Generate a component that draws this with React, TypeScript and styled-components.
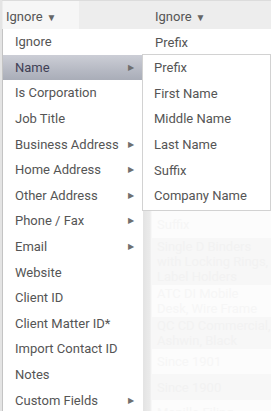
import styled, { createGlobalStyle } from 'styled-components'

const GlobalStyle = createGlobalStyle`
  html, body {
    margin: 0;
    padding: 0;
    background: #ffffff;
  }
  body {
    font-family: Roboto, "Liberation Sans", Arial, sans-serif;
  }
`

const Screen = styled.div`
  position: relative;
  width: 271px;
  height: 411px;
  overflow: hidden;
  background: #e4e4e4;
  padding-left: 2px;
  box-sizing: border-box;
  font-size: 13px;
  color: #555;
`

const Table = styled.div`
  display: flex;
  flex-direction: column;
  height: 100%;
  background: #fafafa;
`

const HeaderRow = styled.div`
  display: grid;
  grid-template-columns: 148px 1fr;
  height: 29px;
  flex-shrink: 0;
  background: #ededed;
  border-top: 1px solid #dcdcdc;
  box-sizing: border-box;
`

const HeaderCell = styled.div<{ $pad: number }>`
  display: flex;
  align-items: center;
  padding-left: ${p => p.$pad}px;
  padding-top: 3px;
`

const Trigger = styled.div<{ $active?: boolean }>`
  display: flex;
  align-items: center;
  gap: 4px;
  height: 100%;
  padding: 0 ${p => (p.$active ? '22px' : '0')} 0 ${p => (p.$active ? '3px' : '0')};
  margin-left: ${p => (p.$active ? '-2px' : '0')};
  margin-top: ${p => (p.$active ? '-3px' : '0')};
  padding-top: ${p => (p.$active ? '3px' : '0')};
  background: ${p => (p.$active ? '#f6f6f6' : 'transparent')};
  color: #555;
`

const Caret = styled.span`
  font-size: 10px;
  color: #666;
  margin-top: 1px;
`

const BodyGrid = styled.div`
  display: grid;
  grid-template-columns: 140px 1fr;
  flex: 1;
  min-height: 0;
`

const LeftCol = styled.div`
  background: #ffffff;
`

const RightCol = styled.div`
  display: flex;
  flex-direction: column;
  overflow: hidden;
  background: linear-gradient(to right, #e2e2e2 0, #ebebeb 8px, #fbfbfb 10px);
`

const PrefixRow = styled.div`
  height: 26px;
  flex-shrink: 0;
  display: flex;
  align-items: center;
  padding-left: 13px;
  background: #ffffff;
`

const GhostRow = styled.div<{ $h: number; $shade: boolean }>`
  height: ${p => p.$h}px;
  flex-shrink: 0;
  margin-left: 10px;
  padding-left: 5px;
  display: flex;
  flex-direction: column;
  justify-content: center;
  background: ${p => (p.$shade ? '#f7f7f7' : '#fcfcfc')};
  color: ${p => (p.$shade ? '#f2f2f2' : '#f6f6f6')};
  font-size: 13px;
  line-height: 15px;
  white-space: nowrap;
  overflow: hidden;
`

const Menu = styled.div`
  position: absolute;
  left: 2px;
  top: 29px;
  width: 141px;
  background: #ffffff;
  border-left: 1px solid #c4c4c4;
  box-sizing: border-box;
  display: flex;
  flex-direction: column;
`

const SubMenu = styled.div`
  position: absolute;
  left: 142px;
  top: 54px;
  width: 129px;
  background: #ffffff;
  border: 1px solid #d2d2d2;
  box-sizing: border-box;
  display: flex;
  flex-direction: column;
  padding-bottom: 1px;
`

const Item = styled.div<{ $selected?: boolean; $indent: number }>`
  height: 25.6px;
  flex-shrink: 0;
  display: flex;
  align-items: center;
  justify-content: space-between;
  padding: 0 9px 0 ${p => p.$indent}px;
  color: ${p => (p.$selected ? '#3f3f55' : '#555')};
  background: ${p =>
    p.$selected ? 'linear-gradient(to bottom, #ccced6 0%, #b8bbc5 55%, #a9adb8 100%)' : 'transparent'};
  white-space: nowrap;
`

const Arrow = styled.span`
  font-size: 8px;
  color: #6f6f6f;
`

const mainItems: { label: string; sub?: boolean }[] = [
  { label: 'Ignore' },
  { label: 'Name', sub: true },
  { label: 'Is Corporation' },
  { label: 'Job Title' },
  { label: 'Business Address', sub: true },
  { label: 'Home Address', sub: true },
  { label: 'Other Address', sub: true },
  { label: 'Phone / Fax', sub: true },
  { label: 'Email', sub: true },
  { label: 'Website' },
  { label: 'Client ID' },
  { label: 'Client Matter ID*' },
  { label: 'Import Contact ID' },
  { label: 'Notes' },
  { label: 'Custom Fields', sub: true },
]

const nameItems = ['Prefix', 'First Name', 'Middle Name', 'Last Name', 'Suffix', 'Company Name']

// rows of the table under the menus; the ones hidden by the submenu carry no text
const ghostRows: { h: number; lines: string[] }[] = [
  { h: 26, lines: [] },
  { h: 26, lines: [] },
  { h: 26, lines: [] },
  { h: 26, lines: [] },
  { h: 26, lines: [] },
  { h: 26, lines: [] },
  { h: 27, lines: ['Suffix'] },
  { h: 47, lines: ['Single D Binders', 'with Locking Rings,', 'Label Holders'] },
  { h: 32, lines: ['ATC DI Mobile', 'Desk, Wire Frame'] },
  { h: 32, lines: ['QC CD Commercial,', 'Ashwin, Black'] },
  { h: 25, lines: ['Since 1901'] },
  { h: 26, lines: ['Since 1900'] },
  { h: 25, lines: ['Manilla Filing'] },
]

export default function App() {
  return (
    <>
      <GlobalStyle />
      <Screen>
        <Table>
          <HeaderRow>
            <HeaderCell $pad={3}>
              <Trigger $active>
                Ignore <Caret>▼</Caret>
              </Trigger>
            </HeaderCell>
            <HeaderCell $pad={5}>
              <Trigger>
                Ignore <Caret>▼</Caret>
              </Trigger>
            </HeaderCell>
          </HeaderRow>
          <BodyGrid>
            <LeftCol />
            <RightCol>
              <PrefixRow>Prefix</PrefixRow>
              {ghostRows.map((r, i) => (
                <GhostRow key={i} $h={r.h} $shade={i % 2 === 1}>
                  {r.lines.map(l => (
                    <span key={l}>{l}</span>
                  ))}
                </GhostRow>
              ))}
            </RightCol>
          </BodyGrid>
        </Table>

        <Menu>
          {mainItems.map(it => (
            <Item key={it.label} $indent={12} $selected={it.label === 'Name'}>
              <span>{it.label}</span>
              {it.sub && <Arrow>▶</Arrow>}
            </Item>
          ))}
        </Menu>

        <SubMenu>
          {nameItems.map(n => (
            <Item key={n} $indent={11}>
              <span>{n}</span>
            </Item>
          ))}
        </SubMenu>
      </Screen>
    </>
  )
}
